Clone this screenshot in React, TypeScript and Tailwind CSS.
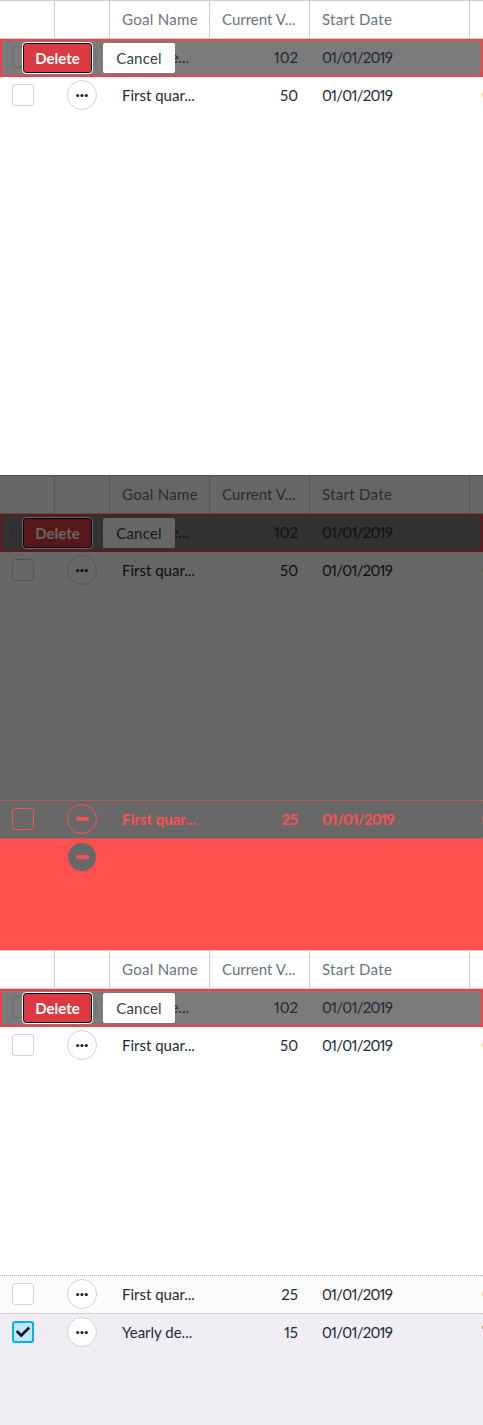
import { FaCheck } from "react-icons/fa";

function Header() {
  return (
    <div className="relative z-10 flex h-[39px] border-y border-[#cfcfcf] bg-white text-[15px] text-[#69747f]">
      <div className="w-[55px] shrink-0 border-r border-[#cfcfcf]" />
      <div className="w-[55px] shrink-0 border-r border-[#cfcfcf]" />
      <div className="flex w-[100px] shrink-0 items-center border-r border-[#cfcfcf] pl-3 tracking-[0.3px] whitespace-nowrap">Goal Name</div>
      <div className="flex w-[100px] shrink-0 items-center border-r border-[#cfcfcf] pl-3 whitespace-nowrap">Current V...</div>
      <div className="flex w-[160px] shrink-0 items-center border-r border-[#cfcfcf] pl-3 tracking-[0.3px] whitespace-nowrap">Start Date</div>
    </div>
  );
}

function Dots() {
  return (
    <svg width="12" height="5" viewBox="0 0 12 5" fill="#1c2530">
      <circle cx="1.7" cy="2.5" r="1.6" />
      <circle cx="6" cy="2.5" r="1.6" />
      <circle cx="10.3" cy="2.5" r="1.6" />
    </svg>
  );
}

type RowProps = {
  name: string;
  value: string;
  className?: string;
  marker?: string;
  checked?: boolean;
  muted?: boolean;
  tick?: boolean;
};

function Row({ name, value, className = "bg-white", marker = "", checked = false, muted = false, tick = false }: RowProps) {
  return (
    <div className={`flex h-[38px] items-center text-[15px] text-[#1d2b38] [font-variant-numeric:proportional-nums] ${className}`}>
      <div className="flex w-[55px] shrink-0 items-center pl-3">
        {checked ? (
          <div className="flex h-[22px] w-[22px] items-center justify-center rounded-[3px] border-2 border-[#00b2f2] bg-[#c0e6fb] text-[#1b1b20]">
            <FaCheck size={14} />
          </div>
        ) : (
          <div className={`h-[22px] w-[22px] rounded-[3px] border ${muted ? "border-[#6c6c6c] bg-[#7b7b7b]" : "border-[#d2d2d2] bg-white"}`} />
        )}
      </div>
      <div className="flex w-[55px] shrink-0 items-center pl-3">
        <div className={`flex h-[30px] w-[30px] items-center justify-center rounded-full border ${muted ? "border-[#6c6c6c] bg-[#7b7b7b]" : "border-[#d2d2d2] bg-white"}`}>
          <Dots />
        </div>
      </div>
      <div className="w-[100px] shrink-0 pl-3 whitespace-nowrap">{name}</div>
      <div className="w-[100px] shrink-0 pr-3 text-right">{value}</div>
      <div className="w-[160px] shrink-0 pl-3 tracking-[-0.75px]">01/01/2019</div>
      {tick ? (
        <div className="mb-[10px] ml-[12px] h-[3px] w-[3px] shrink-0" style={{ background: marker }} />
      ) : (
        <div className="ml-[12px] h-[6px] w-[6px] shrink-0 rounded-full" style={{ background: marker || "transparent" }} />
      )}
    </div>
  );
}

function SelectedRow() {
  return (
    <div className="relative -mt-px">
      <Row name="Yearly re..." value="102" className="bg-[#7b7b7b]" muted />
      <div className="pointer-events-none absolute top-[1px] right-0 left-0 h-[38px] border-2 border-[#f0424a]" />
      <div className="absolute top-[5px] left-[23px] flex items-center gap-[11px] text-[15px]">
        <button className="h-[30px] w-[69px] rounded-[3px] border border-black bg-[#dc3a42] font-bold text-white outline-1 outline-white">
          Delete
        </button>
        <button className="h-[30px] w-[72px] rounded-[2px] bg-white tracking-[0.2px] text-[#36414c]">Cancel</button>
      </div>
    </div>
  );
}

function Table() {
  return (
    <>
      <Header />
      <SelectedRow />
      <Row name="First quar..." value="50" marker="#f8cf78" />
    </>
  );
}

function DropZone() {
  return (
    <div className="h-[111px] bg-[#ff5050]">
      <div className="flex h-[36px] items-center pl-[68px]">
        <div className="flex h-[28px] w-[28px] items-center justify-center rounded-full bg-[#686868]">
          <div className="h-[4px] w-[13px] rounded-full bg-[#ff5050]" />
        </div>
      </div>
    </div>
  );
}

function RedRow() {
  return (
    <div className="flex h-[39px] items-center border-y border-dotted border-[#ff5050] bg-[#686868] pb-px text-[15px] font-bold text-[#ff5050] [font-variant-numeric:proportional-nums]">
      <div className="flex w-[55px] shrink-0 items-center pl-3">
        <div className="h-[22px] w-[22px] rounded-[3px] border border-[#ff5050]" />
      </div>
      <div className="flex w-[55px] shrink-0 items-center pl-3">
        <div className="flex h-[30px] w-[30px] items-center justify-center rounded-full border border-[#ff5050]">
          <div className="h-[4px] w-[13px] rounded-full bg-[#ff5050]" />
        </div>
      </div>
      <div className="w-[100px] shrink-0 pl-3 whitespace-nowrap">First quar...</div>
      <div className="w-[100px] shrink-0 pr-3 text-right">25</div>
      <div className="w-[160px] shrink-0 pl-3 tracking-[-0.75px]">01/01/2019</div>
      <div className="ml-[12px] h-[6px] w-[6px] shrink-0 rounded-full bg-[#ff5050]" />
    </div>
  );
}

export default function App() {
  return (
    <div className="w-[483px] overflow-hidden bg-white font-['Lato','Liberation_Sans',sans-serif]">
      <section className="h-[475px] overflow-hidden">
        <Table />
      </section>

      <section className="relative h-[475px] overflow-hidden">
        <Table />
        <div className="absolute inset-x-0 top-0 z-20 flex h-full flex-col">
          <div className="h-[325px] bg-black/60" />
          <RedRow />
          <DropZone />
        </div>
      </section>

      <section className="flex h-[475px] flex-col overflow-hidden">
        <Table />
        <div className="h-[211px] bg-white" />
        <div className="h-[38px] overflow-hidden border-t border-dotted border-[#b5b5b5] bg-[#fbfbfb]">
          <Row name="First quar..." value="25" className="-mt-px bg-transparent" marker="#f8d488" />
        </div>
        <div className="flex-1 border-t border-dotted border-[#b5b5b5] bg-[#f0edf5]">
          <Row name="Yearly de..." value="15" className="-mt-px bg-transparent" marker="#c9976f" checked tick />
        </div>
      </section>
    </div>
  );
}
